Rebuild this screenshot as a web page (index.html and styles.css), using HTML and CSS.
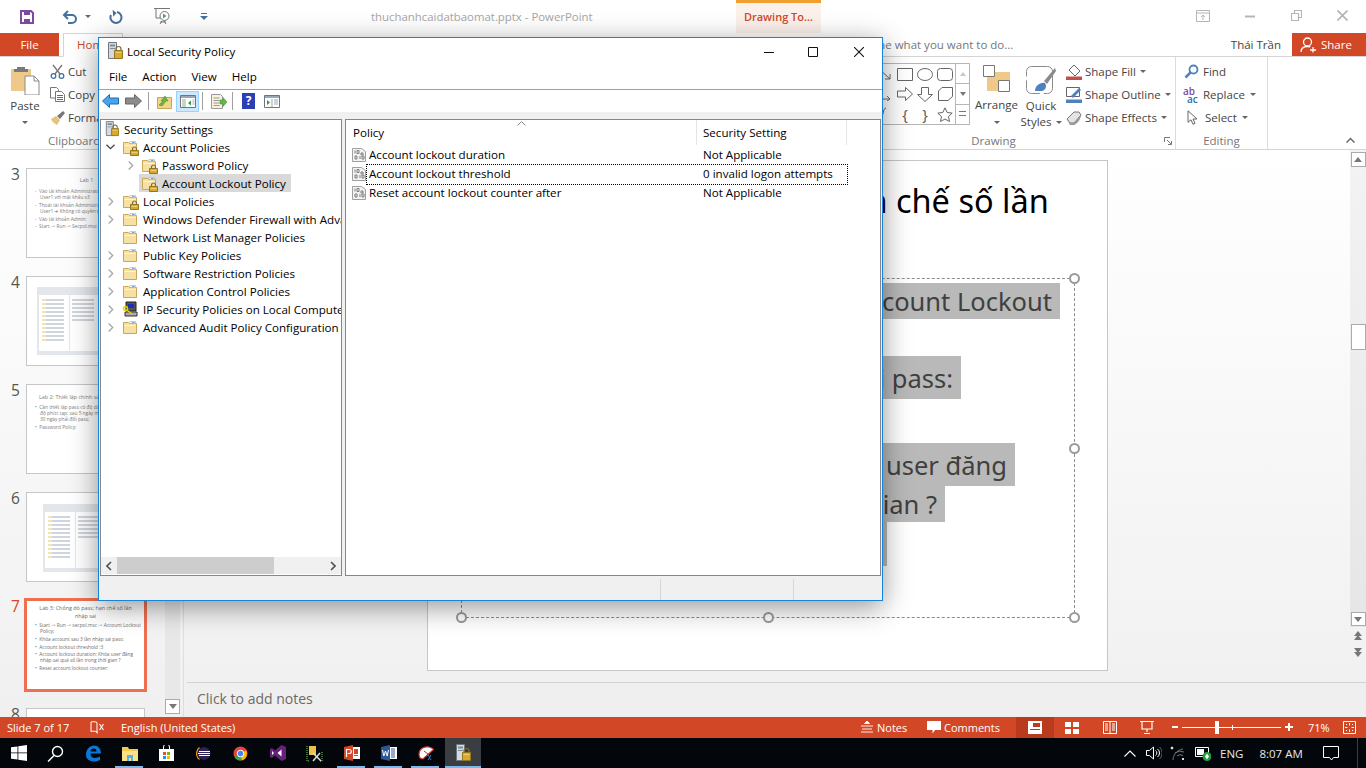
FILE: index.html

```html
<!DOCTYPE html>
<html lang="vi">
<head>
  <meta charset="UTF-8">
  <title>thuchanhcaidatbaomat.pptx - PowerPoint</title>
  <link rel="stylesheet" href="styles.css">
</head>
<body>

  <!-- shared icons -->
  <svg class="defs" width="0" height="0">
    <symbol id="i-folder" viewBox="0 0 16 16">
      <path d="M1.5 3.5h5l1 1h7v10h-13z" fill="#f7e0a3" stroke="#c9a75a"/>
      <path d="M8 2.5h5.5v2H8z" fill="#fff" stroke="#c9a75a" stroke-width=".6"/>
      <path d="M10 3h2.5v1H10z" fill="#6aa6dc"/>
      <path d="M2.5 6h11v1h-11z" fill="#fdf3d6"/>
    </symbol>
    <symbol id="i-lock" viewBox="0 0 9 10">
      <path d="M2.5 4.5V3a2 2 0 0 1 4 0v1.500" fill="none" stroke="#7d6a3a" stroke-width="1.2"/>
      <path d="M.5 4.5h8v5h-8z" fill="#d8a92b" stroke="#94761f"/>
      <path d="M1.5 6h6v1h-6z" fill="#f0cf6a"/>
    </symbol>
    <symbol id="i-policy" viewBox="0 0 14 16">
      <path d="M.5 1.500h9l4 3v10h-13z" fill="#f3f3f3" stroke="#a0a0a0"/>
      <path d="M3 3.500v3M5 3.500h2v3H5zM3 9h2v3H3zM8 9v3M10 9h2v3h-2zM9 6h2v2H9z" fill="none" stroke="#7c7c7c"/>
    </symbol>
    <symbol id="i-server" viewBox="0 0 16 18">
      <path d="M1.500.500h8v16h-8z" fill="#d6dadf" stroke="#6d7680"/>
      <path d="M3 2.500h5v2H3zM3 6h5v1H3z" fill="#7e8a96"/>
      <path d="M9 8.500V7a2.500 2.500 0 0 1 5 0v1.500" fill="none" stroke="#7d6a3a" stroke-width="1.200"/>
      <path d="M7.500 8.500h8v8h-8z" fill="#d8a92b" stroke="#94761f"/>
      <path d="M8.500 10h6v1h-6z" fill="#f0cf6a"/>
    </symbol>
  </svg>

  <div class="ppt">

    <header class="titlebar">
      <div class="qat">
        <svg class="qat-save" width="14" height="14" viewBox="0 0 14 14"><path d="M1 1h10l2 2v10H1z" fill="none" stroke="#7d4aa3" stroke-width="2"/><path d="M4 1h6v4H4zM4 9h6v4H4z" fill="#7d4aa3"/></svg>
        <svg class="qat-undo" width="16" height="14" viewBox="0 0 16 14"><path d="M2 5h8a4 4 0 0 1 0 8H6" fill="none" stroke="#44719f" stroke-width="2"/><path d="M6 1 2 5l4 4" fill="none" stroke="#44719f" stroke-width="2"/></svg>
        <span class="caret qat-caret"></span>
        <svg class="qat-redo" width="14" height="14" viewBox="0 0 14 14"><path d="M8 2a5.500 5.500 0 1 1-6 3" fill="none" stroke="#44719f" stroke-width="2"/><path d="M1 1h5v5z" fill="#44719f" transform="rotate(40 4 4)"/></svg>
        <svg class="qat-show" width="17" height="17" viewBox="0 0 17 17"><path d="M0 .500h16M2 1v9h6M6 14h6" fill="none" stroke="#777"/><circle cx="10.500" cy="8" r="4.500" fill="#fff" stroke="#777"/><path d="M9 5.500v5l3.500-2.500z" fill="#4f9e8a"/><path d="M8 13 6 16M10 13l2 3" stroke="#777"/></svg>
        <svg class="qat-more" width="8" height="7" viewBox="0 0 8 7"><path d="M1 .500h6" stroke="#44719f"/><path d="M0 3h8L4 7z" fill="#44719f"/></svg>
      </div>
      <div class="doc-title">thuchanhcaidatbaomat.pptx - PowerPoint</div>
      <div class="context-tab">Drawing To...</div>
      <div class="win-btns">
        <svg width="14" height="12" viewBox="0 0 14 12"><path d="M.5.500h13v11H.5zM.5 3h13" fill="none" stroke="#b5b5b5"/><path d="M7 10V5M5 7l2-2 2 2" fill="none" stroke="#b5b5b5"/></svg>
        <svg width="10" height="10" viewBox="0 0 10 10"><path d="M0 5.500h10" stroke="#b5b5b5" stroke-width="2"/></svg>
        <svg width="11" height="11" viewBox="0 0 11 11"><path d="M.5 3.500h7v7h-7zM3.500 3V.5h7v7H8" fill="none" stroke="#b5b5b5" stroke-width="1.200"/></svg>
        <svg width="11" height="11" viewBox="0 0 11 11"><path d="M.5.500l10 10M10.500.500l-10 10" stroke="#b5b5b5" stroke-width="1.700"/></svg>
      </div>
    </header>

    <nav class="tabrow">
      <div class="tab-file">File</div>
      <div class="tab-home">Home</div>
      <div class="tell-me">Tell me what you want to do...</div>
      <div class="user">Thái Trần</div>
      <div class="share">
        <svg width="17" height="16" viewBox="0 0 17 16"><circle cx="7.500" cy="5" r="4" fill="none" stroke="#fff" stroke-width="1.300"/><path d="M1 15c0-4 3-5.500 6.500-5.500 1 0 2 .2 2.800.5M13 10v5.500M10 13h6" fill="none" stroke="#fff" stroke-width="1.300"/></svg>
        Share
      </div>
    </nav>

    <section class="ribbon">
      <div class="group group-clip">
        <div class="group-body">
          <div class="big-btn paste-btn">
            <svg width="30" height="30" viewBox="0 0 30 30"><path d="M1 4h20v22H1z" fill="#eec98a"/><path d="M7 2h8v2h3v3H4V4h3z" fill="#7a7a7a"/><path d="M15 11h9l5 5v14H15z" fill="#fff" stroke="#8a8a8a"/><path d="M24 11v5h5" fill="none" stroke="#8a8a8a"/></svg>
            <span>Paste</span>
            <span class="caret"></span>
          </div>
          <div class="small-list">
            <div class="small-btn">
              <svg width="15" height="15" viewBox="0 0 15 15"><path d="M3 1l7 9M12 1l-7 9" stroke="#777" stroke-width="1.300"/><circle cx="3.500" cy="12" r="2.300" fill="none" stroke="#44719f" stroke-width="1.300"/><circle cx="11.500" cy="12" r="2.300" fill="none" stroke="#44719f" stroke-width="1.300"/></svg>
              Cut
            </div>
            <div class="small-btn">
              <svg width="15" height="15" viewBox="0 0 15 15"><path d="M.5.500h6l2 2V11H.5z" fill="#fff" stroke="#777"/><path d="M5.500 4.500h6l3 3v7h-9z" fill="#fff" stroke="#777"/><path d="M7 8.500h6M7 10.500h6M7 12.500h6" stroke="#44719f"/></svg>
              Copy
            </div>
            <div class="small-btn">
              <svg width="15" height="15" viewBox="0 0 15 15"><path d="M1 9l5-3 4 4-3 5C5 14 2 12 1 9z" fill="#e8c27a"/><path d="M7 6l6-5 2 2-5 6z" fill="#777"/></svg>
              Format Painter
            </div>
          </div>
        </div>
        <div class="group-label">Clipboard</div>
      </div>

      <div class="ribbon-right">
        <div class="group group-drawing">
          <div class="group-body">
            <div class="gallery">
              <div class="shape-grid">
                <svg width="16" height="14" viewBox="0 0 16 14"><path d="M1 1l12 11M8 12h5V7" fill="none" stroke="#666"/></svg>
                <svg width="16" height="14" viewBox="0 0 16 14"><path d="M1 1l12 11M8 12h5V7" fill="none" stroke="#666"/></svg>
                <svg width="16" height="13" viewBox="0 0 16 13"><path d="M.5.500h15v12H.5z" fill="none" stroke="#666"/></svg>
                <svg width="16" height="13" viewBox="0 0 16 13"><ellipse cx="8" cy="6.500" rx="7.500" ry="6" fill="none" stroke="#666"/></svg>
                <svg width="16" height="13" viewBox="0 0 16 13"><rect x=".5" y=".5" width="15" height="12" rx="3" fill="none" stroke="#666"/></svg>
                <svg width="16" height="14" viewBox="0 0 16 14"><path d="M1 1v11h12M10 9l3 3-3 2" fill="none" stroke="#666"/></svg>
                <svg width="16" height="14" viewBox="0 0 16 14"><path d="M1 1v11h12M10 9l3 3-3 2" fill="none" stroke="#666"/></svg>
                <svg width="16" height="14" viewBox="0 0 16 14"><path d="M.5 4h8V.500l7 6.500-7 6.500V10h-8z" fill="none" stroke="#666"/></svg>
                <svg width="16" height="15" viewBox="0 0 16 15"><path d="M4.500.500h7v7h4L8 14.500.5 7.500h4z" fill="none" stroke="#666"/></svg>
                <svg width="16" height="14" viewBox="0 0 16 14"><path d="M5 .500h10.500v9L11 13.500H1.500V4z" fill="none" stroke="#666"/></svg>
                <svg width="16" height="15" viewBox="0 0 16 15"><path d="M1 14C7 14 5 1 9 1" fill="none" stroke="#666"/></svg>
                <svg width="16" height="15" viewBox="0 0 16 15"><path d="M1 14C7 14 5 1 9 1" fill="none" stroke="#666"/></svg>
                <span class="brace">{</span>
                <span class="brace">}</span>
                <svg width="16" height="15" viewBox="0 0 16 15"><path d="M8 .800l2.200 4.700 5 .6-3.700 3.400 1 5L8 12l-4.500 2.500 1-5L.8 6.100l5-.6z" fill="none" stroke="#666"/></svg>
              </div>
              <div class="gallery-scroll">
                <span><i class="tri-up light"></i></span>
                <span><i class="tri-down"></i></span>
                <span><i class="tri-more"></i></span>
              </div>
            </div>
            <div class="big-btn arrange-btn">
              <svg width="28" height="27" viewBox="0 0 28 27"><path d="M9 7h18v13H9z" fill="#eec98a"/><path d="M.5.500h11v11H.5z" fill="#fff" stroke="#777"/><path d="M4 12h12v14H4z" fill="#eec98a"/><path d="M15.500 15.500h11v11h-11z" fill="#fff" stroke="#777"/></svg>
              <span>Arrange</span>
              <span class="caret"></span>
            </div>
            <div class="big-btn styles-btn">
              <svg width="30" height="29" viewBox="0 0 30 29"><rect x=".5" y="1.500" width="26" height="27" rx="5" fill="#fff" stroke="#8a8a8a" stroke-dasharray="24 4"/><path d="M18 16 29 3l1 3-9 13z" fill="#8a8a8a"/><path d="M9 26c0-5 5-9 10-8 2 3 1 7-3 8z" fill="#4f81bd"/></svg>
              <span>Quick</span>
              <span class="styles-line">Styles <i class="caret inline"></i></span>
            </div>
            <div class="small-list shape-list">
              <div class="small-btn">
                <svg width="16" height="16" viewBox="0 0 16 16"><path d="M8 1l6 6-5 5-6-6z" fill="#fff" stroke="#666"/><path d="M0 12.500h16V16H0z" fill="#c0504d"/></svg>
                Shape Fill <i class="caret inline"></i>
              </div>
              <div class="small-btn">
                <svg width="16" height="16" viewBox="0 0 16 16"><path d="M.5.500h13v9H.5z" fill="#fff" stroke="#666"/><path d="M5 9l8-8 2 2-8 8z" fill="#4f81bd"/><path d="M0 12.500h16V16H0z" fill="#4f81bd"/></svg>
                Shape Outline <i class="caret inline"></i>
              </div>
              <div class="small-btn">
                <svg width="16" height="14" viewBox="0 0 16 14"><path d="M1 8l7-7h5l2 3-7 8H4z" fill="#e4e4e4" stroke="#777"/><path d="M1 8l3 4h4l7-8c0 4-4 9-7 10H4z" fill="#999"/></svg>
                Shape Effects <i class="caret inline"></i>
              </div>
            </div>
          </div>
          <div class="group-label">Drawing</div>
          <svg class="launcher" width="8" height="8" viewBox="0 0 8 8"><path d="M.5 5V.5H6M3 3l4 4M4 7.500h3.500V4" fill="none" stroke="#777"/></svg>
        </div>

        <div class="group group-editing">
          <div class="group-body">
            <div class="small-list">
              <div class="small-btn edit-btn">
                <svg width="15" height="15" viewBox="0 0 15 15"><circle cx="9.500" cy="5.500" r="4" fill="none" stroke="#4f81bd" stroke-width="1.800"/><path d="M6.500 8.500 1.500 13.500" stroke="#4f81bd" stroke-width="2.500"/></svg>
                Find
              </div>
              <div class="small-btn edit-btn">
                <span class="replace-ico"><b>ab</b><b class="ac">ac</b></span>
                Replace <i class="caret inline replace-caret"></i>
              </div>
              <div class="small-btn edit-btn">
                <svg class="select-ico" width="11" height="15" viewBox="0 0 11 15"><path d="M1 .800v11.500l3-2.500 2 4.500 2-1-2-4.300h4z" fill="#fff" stroke="#666"/></svg>
                Select <i class="caret inline"></i>
              </div>
            </div>
          </div>
          <div class="group-label">Editing</div>
        </div>

        <div class="ribbon-end">
          <svg width="9" height="6" viewBox="0 0 9 6"><path d="M.5 5.500l4-4 4 4" fill="none" stroke="#666" stroke-width="1.500"/></svg>
        </div>
      </div>
    </section>

    <main class="workspace">
      <aside class="thumbs">
        <div class="thumb-list">
          <div class="thumb-row">
            <span class="thumb-num">3</span>
            <div class="thumb">
              <div class="t-title">Lab 1</div>
              <div class="t-line">-&nbsp; Vào tài khoản Administrator tạo</div>
              <div class="t-line t-sub">User1 với mật khẩu x3</div>
              <div class="t-line">-&nbsp; Thoát tài khoản Administrator, vào</div>
              <div class="t-line t-sub">User1 ➔ Không có quyền truy cập</div>
              <div class="t-line">-&nbsp; Vào tài khoản Admin:</div>
              <div class="t-line t-tight">-&nbsp; Start -&gt; Run -&gt; Secpol.msc</div>
            </div>
          </div>
          <div class="thumb-row">
            <span class="thumb-num">4</span>
            <div class="thumb thumb-pic">
              <div class="mini-win">
                <div class="mini-tree"></div>
                <div class="mini-list"></div>
              </div>
            </div>
          </div>
          <div class="thumb-row">
            <span class="thumb-num">5</span>
            <div class="thumb thumb-lab2">
              <div class="t-title t-left">Lab 2: Thiết lập chính sách mật khẩu</div>
              <div class="t-line">•&nbsp; Cần thiết lập pass có độ dài tối thiểu</div>
              <div class="t-line t-sub">độ phức tạp; sau 5 ngày mới được</div>
              <div class="t-line t-sub">30 ngày phải đổi pass;</div>
              <div class="t-line">•&nbsp; Password Policy:</div>
            </div>
          </div>
          <div class="thumb-row">
            <span class="thumb-num">6</span>
            <div class="thumb thumb-pic thumb-pic-b">
              <div class="mini-win">
                <div class="mini-tree"></div>
                <div class="mini-list"></div>
              </div>
            </div>
          </div>
          <div class="thumb-row">
            <span class="thumb-num active">7</span>
            <div class="thumb selected">
              <div class="t-title">Lab 3: Chống dò pass; hạn chế số lần<br>nhập sai</div>
              <div class="t-line">•&nbsp; Start -&gt; Run -&gt; secpol.msc -&gt; Account Lockout</div>
              <div class="t-line t-sub">Policy;</div>
              <div class="t-line">•&nbsp; Khóa account sau 3 lần nhập sai pass:</div>
              <div class="t-line">•&nbsp; Account lockout threshold :3</div>
              <div class="t-line t-tight">•&nbsp; Account lockout duration: Khóa user đăng</div>
              <div class="t-line t-sub">nhập sai quá số lần trong thời gian ?</div>
              <div class="t-line">•&nbsp; Reset account lockout counter:</div>
            </div>
          </div>
          <div class="thumb-row">
            <span class="thumb-num">8</span>
            <div class="thumb"></div>
          </div>
        </div>
        <div class="thumb-scroll">
          <span class="sb-btn sb-spacer"></span>
          <span class="sb-btn"><i class="tri-down"></i></span>
        </div>
      </aside>

      <div class="editor">
        <div class="canvas">
          <div class="slide">
            <div class="slide-title">Lab 3: Chống dò pass; hạn chế số lần</div>
            <div class="slide-title">nhập sai</div>
            <div class="placeholder">
              <div class="ph-line h36 m14"><span>Start -&gt; Run -&gt; secpol.msc -&gt; Account Lockout</span></div>
              <div class="ph-line h37 m300"><span>Policy;</span></div>
              <div class="ph-line h43 m113"><span>Khóa account sau 3 lần nhập sai pass:</span></div>
              <div class="ph-line h44 m300"><span>Account lockout threshold :3</span></div>
              <div class="ph-line h43 m59"><span>Account lockout duration: Khóa user đăng</span></div>
              <div class="ph-line h36 m129"><span>nhập sai quá số lần trong thời gian ?</span></div>
              <div class="ph-line h44 m187"><span>Reset account lockout counter:</span></div>
              <i class="handle h-tr"></i>
              <i class="handle h-mr"></i>
              <i class="handle h-br"></i>
              <i class="handle h-bm"></i>
              <i class="handle h-bl"></i>
            </div>
          </div>
          <div class="edit-scroll">
            <div class="sb-track">
              <span class="sb-btn"><i class="tri-up"></i></span>
              <span class="sb-thumb"></span>
              <span class="sb-btn"><i class="tri-down"></i></span>
            </div>
            <span class="sb-page"><i class="tri-up"></i><i class="tri-up"></i></span>
            <span class="sb-page"><i class="tri-down"></i><i class="tri-down"></i></span>
          </div>
        </div>
        <div class="notes">Click to add notes</div>
      </div>
    </main>

    <footer class="statusbar">
      <div class="status-left">
        <span class="slide-count">Slide 7 of 17</span>
        <svg width="15" height="13" viewBox="0 0 15 13"><path d="M7 1.500C5 .5 3 .5 1 1v9.500c2-.5 4-.5 6 .5 0 0 0 1 .5 1.500M7 1.500V12" fill="none" stroke="#fff"/><path d="M9.500 3l4 6M13.500 3l-4 6" stroke="#fff" stroke-width="1.200"/></svg>
        <span class="lang">English (United States)</span>
      </div>
      <div class="status-right">
        <svg class="notes-ico" width="12" height="12" viewBox="0 0 12 12"><path d="M6 0l2.500 2.500h-5zM0 5h12M1 8h10M0 11h12" fill="#fff" stroke="#fff" stroke-width=".9"/></svg>
        <span class="st-text notes-text">Notes</span>
        <svg class="comm-ico" width="14" height="13" viewBox="0 0 14 13"><path d="M0 0h14v9H8l-2.500 3.500V9H0z" fill="#fff"/></svg>
        <span class="st-text comm-text">Comments</span>
        <div class="view-btns">
          <span class="view-btn on"><svg width="14" height="13" viewBox="0 0 14 13"><path d="M0 0h14v13H0z" fill="#fff"/><path d="M5 2h7v4H5zM2 8h10v1H2z" fill="#b83b1d"/></svg></span>
          <span class="view-btn"><svg width="14" height="12" viewBox="0 0 14 12"><path d="M0 0h6v5H0zM8 0h6v5H8zM0 7h6v5H0zM8 7h6v5H8z" fill="#fff"/></svg></span>
          <span class="view-btn"><svg width="14" height="13" viewBox="0 0 14 13"><path d="M.5.500h13v12H.5zM7 .500v12" fill="none" stroke="#fff"/><path d="M2 3h3M2 5h3M2 7h3M2 9h3M9 3h3M9 5h3M9 7h3M9 9h3" stroke="#fff"/></svg></span>
          <span class="view-btn"><svg width="14" height="13" viewBox="0 0 14 13"><path d="M0 .500h14M2 1v7h10V1M7 8v3M4 12.500h6" fill="none" stroke="#fff" stroke-width="1.200"/></svg></span>
        </div>
        <div class="zoom">
          <span class="z-minus"></span>
          <span class="z-track"><i class="z-tick"></i><i class="z-knob"></i></span>
          <span class="z-plus"></span>
        </div>
        <span class="st-text z-val">71%</span>
        <svg class="fit-ico" width="13" height="13" viewBox="0 0 13 13"><path d="M.5.500h12v12H.5z" fill="none" stroke="#fff"/><path d="M6.500 2v2.500M6.500 8.500V11M2 6.500h2.500M8.500 6.500H11M3 3l1 1M10 3 9 4M3 10l1-1M10 10 9 9" stroke="#fff"/></svg>
      </div>
    </footer>

    <div class="taskbar">
      <div class="task-icons">
        <span class="task"><svg width="16" height="16" viewBox="0 0 16 16"><path d="M0 2.300 6.500 1.400V7.500H0zM7.300 1.300 16 0v7.500H7.300zM0 8.300h6.500v6.300L0 13.700zM7.300 8.300H16V16L7.300 14.700z" fill="#fff"/></svg></span>
        <span class="task"><svg width="17" height="17" viewBox="0 0 17 17"><circle cx="10.500" cy="6.500" r="5" fill="none" stroke="#fff" stroke-width="1.400"/><path d="M7 10.500 1 16.500" stroke="#fff" stroke-width="1.500"/></svg></span>
        <span class="task"><svg width="16" height="17" viewBox="0 0 16 17"><path d="M1 10C1 4 5 .5 9 .5c4 0 7 3 7 8H5.500c0 3 2 4.500 4.500 4.500 2 0 4-.8 5-1.500v3.500c-1.500.8-3.500 1.500-5.500 1.500C4.500 16.500 1 14 1 10zM5.500 6.500h6C11.500 4.500 10.500 3.500 8.800 3.500 7 3.500 5.800 4.800 5.500 6.500z" fill="#0a78d7"/></svg></span>
        <span class="task running"><svg width="16" height="15" viewBox="0 0 16 15"><path d="M0 1h6l1 2h9v12H0z" fill="#f4c94f"/><path d="M0 5h16v10H0z" fill="#fbe08a"/><path d="M5 15V9h6v6h-2v-3H7v3z" fill="#52b3e8"/></svg></span>
        <span class="task"><svg width="15" height="16" viewBox="0 0 15 16"><path d="M0 4h15v12H0z" fill="#fff"/><path d="M4.500 4V2a3 3 0 0 1 6 0v2" fill="none" stroke="#fff"/><path d="M4 7h3v3H4z" fill="#f25022"/><path d="M8 7h3v3H8z" fill="#7fba00"/><path d="M4 11h3v3H4z" fill="#00a4ef"/><path d="M8 11h3v3H8z" fill="#ffb900"/></svg></span>
        <span class="task"><svg width="15" height="15" viewBox="0 0 15 15"><circle cx="8" cy="7.500" r="6.500" fill="#2c2255"/><path d="M3 5.500h11M2 7.500h12M3 9.500h11" stroke="#fff"/><path d="M3.500 1.500a7.500 7.500 0 0 0 0 12" fill="none" stroke="#f7941e" stroke-width="1.200"/></svg></span>
        <span class="task"><svg width="15" height="15" viewBox="0 0 15 15"><circle cx="7.500" cy="7.500" r="7" fill="#e8453c"/><path d="M7.500 7.500 1.500 11a7 7 0 0 0 8 3z" fill="#34a853"/><path d="M7.500 7.500l5.500-3A7 7 0 0 1 9 14.400z" fill="#fbbc05"/><circle cx="7.500" cy="7.500" r="3.300" fill="#4285f4" stroke="#fff"/></svg></span>
        <span class="task"><svg width="16" height="16" viewBox="0 0 16 16"><path d="M11.500 0 16 2v12l-4.500 2L5 10.500 2 13 0 12V4l2-1 3 2.500z" fill="#68217a"/><path d="M11.500 4.500v7L7.500 8zM2 6l2 2-2 2z" fill="#fff"/></svg></span>
        <span class="task"><svg width="17" height="17" viewBox="0 0 17 17"><path d="M3 1h7v9H3z" fill="#e8c24a"/><path d="M1 1v15h3M14 16h2V6" fill="none" stroke="#7bd45a" stroke-dasharray="1 1"/><path d="M7 8l8 8M14 8l-7 8" stroke="#ddd" stroke-width="1.500"/></svg></span>
        <span class="task running"><svg width="16" height="16" viewBox="0 0 16 16"><path d="M0 2l9-2v16l-9-2z" fill="#d24726"/><path d="M9 2h7v12H9z" fill="#fff"/><path d="M10 4h4v5h-4zM10 10h4v1h-4z" fill="#d24726"/><path d="M2.500 12V4.500h2.800a1.500 1.500 0 0 1 0 4H3.800" fill="none" stroke="#fff" stroke-width="1.200"/></svg></span>
        <span class="task running"><svg width="16" height="16" viewBox="0 0 16 16"><path d="M0 2l9-2v16l-9-2z" fill="#2b579a"/><path d="M9 2h7v12H9z" fill="#fff"/><path d="M10 4h4M10 6h4M10 8h4M10 10h4M10 12h4" stroke="#2b579a"/><path d="M1.500 5l1.300 6 1.700-5 1.700 5L7.500 5" fill="none" stroke="#fff" stroke-width="1"/></svg></span>
        <span class="task running"><svg width="16" height="15" viewBox="0 0 16 15"><path d="M1 8C1 3 6 0 11 1c3 .8 5 2 4 3L5 13C2 13 1 11 1 8z" fill="#fff" stroke="#c8312b" stroke-width="1.200"/><path d="M6 5l4 3" stroke="#c8312b"/><path d="M10 9l3 5M13 9l-3 5" stroke="#2f7fd1"/></svg></span>
        <span class="task active running"><svg width="16" height="18"><use href="#i-server"/></svg></span>
      </div>
      <div class="tray">
        <svg class="tr-up" width="12" height="7" viewBox="0 0 12 7"><path d="M.5 6.500l5.500-5.500 5.500 5.500" fill="none" stroke="#fff" stroke-width="1.100"/></svg>
        <svg class="tr-vol" width="16" height="14" viewBox="0 0 16 14"><path d="M.5 4.500h3l4-3.500v12l-4-3.500h-3z" fill="none" stroke="#fff"/><path d="M9.500 4.500a3 3 0 0 1 0 5M11.500 3a5 5 0 0 1 0 8" fill="none" stroke="#fff"/><path d="M13.500 1a8 8 0 0 1 0 12" fill="none" stroke="#666"/></svg>
        <svg class="tr-wifi" width="15" height="15" viewBox="0 0 15 15"><path d="M1 1l2 2M3 1 1 3M2 .500v3M.5 2h3" stroke="#fff" stroke-width=".7"/><path d="M5 7a9 9 0 0 1 9-1M7 10a5 5 0 0 1 6-.500M3 14c0-4 3-10 10-11" fill="none" stroke="#777"/><path d="M12 12h2v2h-2z" fill="#ddd"/></svg>
        <svg class="tr-bat" width="16" height="15" viewBox="0 0 16 15"><path d="M.5 1.500h13v9H.5z" fill="none" stroke="#fff"/><path d="M2 3h7v6H2z" fill="#fff"/><circle cx="12" cy="10.500" r="4.500" fill="#1f9d3e"/><path d="M12 7.500l2 3-2 3-2-3z" fill="#fff"/></svg>
        <span class="tr-lang">ENG</span>
        <span class="tr-time">8:07 AM</span>
        <svg class="tr-note" width="16" height="15" viewBox="0 0 16 15"><path d="M.5.500h15v11h-5l-2 2.500-2-2.500H.5z" fill="none" stroke="#fff"/></svg>
      </div>
    </div>
  </div>

  <!-- the floating window -->
  <div class="secpol">
    <div class="sp-title">
      <svg width="16" height="18"><use href="#i-server"/></svg>
      <span>Local Security Policy</span>
      <div class="sp-ctrls">
        <span class="ctrl-min"><svg width="10" height="10" viewBox="0 0 10 10"><path d="M0 5.500h10" stroke="#111"/></svg></span>
        <span><svg width="10" height="10" viewBox="0 0 10 10"><path d="M.5.500h9v9h-9z" fill="none" stroke="#111"/></svg></span>
        <span><svg width="10" height="10" viewBox="0 0 10 10"><path d="M0 0l10 10M10 0 0 10" stroke="#111" stroke-width="1.100"/></svg></span>
      </div>
    </div>
    <div class="sp-menu">
      <span>File</span><span>Action</span><span>View</span><span>Help</span>
    </div>
    <div class="sp-tools">
      <svg class="tool-back" width="17" height="14" viewBox="0 0 17 14"><path d="M7.500.500v3.500h9v6h-9v3.500L.5 7z" fill="#4aa5e8" stroke="#1b6cb5"/></svg>
      <svg class="tool-fwd" width="17" height="14" viewBox="0 0 17 14"><path d="M9.500.500v3.500h-9v6h9v3.500l7-6.500z" fill="#8b8b8b" stroke="#666"/></svg>
      <i class="tool-sep"></i>
      <svg class="tool-up" width="15" height="15" viewBox="0 0 15 15"><path d="M.5 3.500h14v11H.5z" fill="#f3d58a" stroke="#c9a75a"/><path d="M2 11 6 7H4l4-5 3 5H9l-4 5z" fill="#6cb33f" stroke="#4b8a22" stroke-width=".5"/></svg>
      <span class="tool-on">
        <svg width="16" height="13" viewBox="0 0 16 13"><path d="M.5.500h15v12H.5z" fill="#fff" stroke="#6d7680"/><path d="M1 1h14v2H1z" fill="#9aa7b5"/><path d="M2 4h4v8H2z" fill="#c9d6c3"/><path d="M11 5.500v5L8 8z" fill="#2f9a4a"/><path d="M12.500 5h2M12.500 7h2M12.500 9h2" stroke="#9aa7b5"/></svg>
      </span>
      <i class="tool-sep tool-sep-b"></i>
      <svg class="tool-exp" width="16" height="15" viewBox="0 0 16 15"><path d="M.5.500h9l2 2v12H.5z" fill="#f7f1de" stroke="#9a9a9a"/><path d="M2.500 4h6M2.500 6.500h6M2.500 9h6M2.500 11.500h6" stroke="#9a9a9a"/><path d="M9 6h3V3.500L16 8l-4 4.500V10H9z" fill="#62b848" stroke="#3f8a2c" stroke-width=".5"/></svg>
      <i class="tool-sep tool-sep-c"></i>
      <span class="tool-help">?</span>
      <svg class="tool-prop" width="16" height="13" viewBox="0 0 16 13"><path d="M.5.500h15v12H.5z" fill="#fff" stroke="#6d7680"/><path d="M1 1h14v2H1z" fill="#9aa7b5"/><path d="M3 5v5l3-2.500z" fill="#2f9a4a"/><path d="M8 4v8" stroke="#9aa7b5"/><path d="M10 5h4M10 7h4M10 9h4" stroke="#9aa7b5"/></svg>
    </div>
    <div class="sp-panes">
      <div class="tree-pane">
        <div class="tree">
          <div class="tree-row root">
            <svg width="14" height="16"><use href="#i-server"/></svg>
            <span>Security Settings</span>
          </div>
          <div class="tree-row l1">
            <svg class="tw tw-open" width="9" height="6" viewBox="0 0 9 6"><path d="M.5.700l4 4 4-4" fill="none" stroke="#444" stroke-width="1.300"/></svg>
            <span class="fold"><svg width="16" height="16"><use href="#i-folder"/></svg><svg class="padlock" width="9" height="10"><use href="#i-lock"/></svg></span>
            <span>Account Policies</span>
          </div>
          <div class="tree-row l2">
            <svg class="tw" width="6" height="9" viewBox="0 0 6 9"><path d="M.7.500l4 4-4 4" fill="none" stroke="#a6a6a6" stroke-width="1.300"/></svg>
            <span class="fold"><svg width="16" height="16"><use href="#i-folder"/></svg><svg class="padlock" width="9" height="10"><use href="#i-lock"/></svg></span>
            <span>Password Policy</span>
          </div>
          <div class="tree-row l2 sel">
            <span class="fold"><svg width="16" height="16"><use href="#i-folder"/></svg><svg class="padlock" width="9" height="10"><use href="#i-lock"/></svg></span>
            <span>Account Lockout Policy</span>
          </div>
          <div class="tree-row l1">
            <svg class="tw" width="6" height="9" viewBox="0 0 6 9"><path d="M.7.500l4 4-4 4" fill="none" stroke="#a6a6a6" stroke-width="1.300"/></svg>
            <span class="fold"><svg width="16" height="16"><use href="#i-folder"/></svg><svg class="padlock" width="9" height="10"><use href="#i-lock"/></svg></span>
            <span>Local Policies</span>
          </div>
          <div class="tree-row l1">
            <svg class="tw" width="6" height="9" viewBox="0 0 6 9"><path d="M.7.500l4 4-4 4" fill="none" stroke="#a6a6a6" stroke-width="1.300"/></svg>
            <span class="fold"><svg width="16" height="16"><use href="#i-folder"/></svg></span>
            <span>Windows Defender Firewall with Advanced Security</span>
          </div>
          <div class="tree-row l1">
            <span class="fold"><svg width="16" height="16"><use href="#i-folder"/></svg></span>
            <span>Network List Manager Policies</span>
          </div>
          <div class="tree-row l1">
            <svg class="tw" width="6" height="9" viewBox="0 0 6 9"><path d="M.7.500l4 4-4 4" fill="none" stroke="#a6a6a6" stroke-width="1.300"/></svg>
            <span class="fold"><svg width="16" height="16"><use href="#i-folder"/></svg></span>
            <span>Public Key Policies</span>
          </div>
          <div class="tree-row l1">
            <svg class="tw" width="6" height="9" viewBox="0 0 6 9"><path d="M.7.500l4 4-4 4" fill="none" stroke="#a6a6a6" stroke-width="1.300"/></svg>
            <span class="fold"><svg width="16" height="16"><use href="#i-folder"/></svg></span>
            <span>Software Restriction Policies</span>
          </div>
          <div class="tree-row l1">
            <svg class="tw" width="6" height="9" viewBox="0 0 6 9"><path d="M.7.500l4 4-4 4" fill="none" stroke="#a6a6a6" stroke-width="1.300"/></svg>
            <span class="fold"><svg width="16" height="16"><use href="#i-folder"/></svg></span>
            <span>Application Control Policies</span>
          </div>
          <div class="tree-row l1">
            <svg class="tw" width="6" height="9" viewBox="0 0 6 9"><path d="M.7.500l4 4-4 4" fill="none" stroke="#a6a6a6" stroke-width="1.300"/></svg>
            <span class="fold"><svg width="16" height="16" viewBox="0 0 16 16"><path d="M4 1h10v9H4z" fill="#555" stroke="#222"/><path d="M6 3h6v4H6z" fill="#1a2fb8"/><path d="M3 11h12v4H3z" fill="#aaa" stroke="#333"/><circle cx="3.500" cy="7.500" r="2" fill="none" stroke="#e8d200" stroke-width="1.400"/><path d="M5 9l5 4" stroke="#e8d200" stroke-width="1.400"/></svg></span>
            <span>IP Security Policies on Local Computer</span>
          </div>
          <div class="tree-row l1">
            <svg class="tw" width="6" height="9" viewBox="0 0 6 9"><path d="M.7.500l4 4-4 4" fill="none" stroke="#a6a6a6" stroke-width="1.300"/></svg>
            <span class="fold"><svg width="16" height="16"><use href="#i-folder"/></svg></span>
            <span>Advanced Audit Policy Configuration</span>
          </div>
        </div>
        <div class="hscroll">
          <span class="hs-btn"><svg width="6" height="10" viewBox="0 0 6 10"><path d="M5 1 1 5l4 4" fill="none" stroke="#505050" stroke-width="1.600"/></svg></span>
          <div class="hs-track"><i class="hs-thumb"></i></div>
          <span class="hs-btn"><svg width="6" height="10" viewBox="0 0 6 10"><path d="M1 1l4 4-4 4" fill="none" stroke="#505050" stroke-width="1.600"/></svg></span>
        </div>
      </div>
      <div class="list-pane">
        <div class="list-head">
          <span class="col-a">Policy</span>
          <span class="col-b">Security Setting</span>
          <svg class="sort-mark" width="9" height="5" viewBox="0 0 9 5"><path d="M.5 4.500l4-4 4 4" fill="none" stroke="#888"/></svg>
        </div>
        <div class="list-row">
          <svg width="14" height="16"><use href="#i-policy"/></svg>
          <span class="col-a">Account lockout duration</span>
          <span class="col-b">Not Applicable</span>
        </div>
        <div class="list-row focus">
          <svg width="14" height="16"><use href="#i-policy"/></svg>
          <span class="col-a">Account lockout threshold</span>
          <span class="col-b">0 invalid logon attempts</span>
        </div>
        <div class="list-row">
          <svg width="14" height="16"><use href="#i-policy"/></svg>
          <span class="col-a">Reset account lockout counter after</span>
          <span class="col-b">Not Applicable</span>
        </div>
      </div>
    </div>
    <div class="sp-status">
      <span class="sp-cell grow"></span>
      <span class="sp-cell mid"></span>
      <span class="sp-cell end"></span>
    </div>
  </div>

</body>
</html>
```

FILE: styles.css

```css
* { box-sizing: border-box; }
html, body { margin: 0; height: 100%; }
body {
  width: 1366px;
  height: 768px;
  overflow: hidden;
  position: relative;
  font-family: "Open Sans", "Noto Sans", sans-serif;
  font-size: 11.5px;
  color: #444;
  background: #fff;
}
svg { display: block; flex: none; }
i { font-style: normal; }
.defs { position: absolute; }

.ppt {
  display: flex;
  flex-direction: column;
  height: 768px;
}

/* ---- title bar ---- */
.titlebar {
  display: flex;
  height: 33px;
  flex: none;
  background: #fff;
}
.qat {
  width: 371px;
  display: flex;
  align-items: center;
}
.qat-save { margin-left: 20px; }
.qat-undo { margin-left: 28px; }
.qat-caret { margin-left: 7px; }
.qat-redo { margin-left: 18px; }
.qat-show { margin-left: 31px; }
.qat-more { margin-left: 29px; }
.doc-title {
  width: 365px;
  line-height: 33px;
  color: #a6a6a6;
  font-size: 11.4px;
}
.context-tab {
  width: 85px;
  text-align: center;
  background: #fbf0ea;
  border-top: 3px solid #f0a030;
  color: #d24726;
  line-height: 27px;
  font-size: 11px;
  font-weight: 600;
}
.win-btns {
  margin-left: auto;
  width: 184px;
  display: flex;
  align-items: center;
  justify-content: space-between;
  padding: 0 18px 2px 14px;
}

/* ---- tab row ---- */
.tabrow {
  display: flex;
  height: 24px;
  flex: none;
  align-items: stretch;
  border-bottom: 1px solid #d4d4d4;
  background: #fff;
}
.tab-file {
  width: 59px;
  background: #d24726;
  color: #fff;
  text-align: center;
  line-height: 23px;
}
.tab-home {
  width: 60px;
  margin-left: 4px;
  height: 24px;
  padding-left: 13px;
  border: 1px solid #d4d4d4;
  border-bottom-color: #fff;
  color: #d24726;
  line-height: 22px;
  background: #fff;
}
.tell-me {
  width: 890px;
  padding-left: 730px;
  white-space: nowrap;
  color: #777;
  line-height: 23px;
}
.user {
  margin-left: auto;
  color: #444;
  line-height: 23px;
  margin-right: 11px;
}
.share {
  width: 74px;
  background: #d24726;
  color: #fff;
  display: flex;
  align-items: center;
  gap: 4px;
  padding-left: 8px;
}

/* ---- ribbon ---- */
.ribbon {
  display: flex;
  justify-content: space-between;
  height: 93px;
  flex: none;
  border-bottom: 1px solid #d4d4d4;
  background: #fff;
}
.ribbon-right { display: flex; }
.group {
  display: flex;
  flex-direction: column;
  position: relative;
  height: 92px;
}
.group-body {
  display: flex;
  height: 75px;
}
.group-label {
  text-align: center;
  line-height: 17px;
  color: #777;
}
.big-btn {
  display: flex;
  flex-direction: column;
  align-items: center;
  line-height: 16px;
  color: #444;
}
.caret {
  display: inline-block;
  width: 0;
  height: 0;
  border: 3px solid transparent;
  border-top: 3px solid #666;
  border-bottom: 0;
}
.caret.inline { vertical-align: middle; margin-left: 1px; }
.paste-btn { width: 50px; padding-top: 8px; }
.paste-btn span:nth-child(2) { margin-top: 3px; }
.paste-btn .caret { margin-top: 7px; }
.small-list {
  display: flex;
  flex-direction: column;
  padding-top: 3px;
}
.small-btn {
  height: 23px;
  display: flex;
  align-items: center;
  gap: 3px;
  white-space: nowrap;
  color: #444;
}
.group-drawing {
  width: 364px;
  padding-left: 42px;
  border-right: 1px solid #dcdcdc;
}
.group-drawing .group-label { margin-left: -42px; }
.gallery {
  width: 116px;
  height: 62px;
  margin-top: 6px;
  display: flex;
  border: 1px solid #b6b6b6;
}
.shape-grid {
  flex: 1;
  display: grid;
  grid-template-columns: repeat(5, 20px);
  grid-auto-rows: 20px;
  align-items: center;
  justify-items: center;
}
.brace { font-size: 15px; color: #555; line-height: 20px; }
.gallery-scroll {
  width: 14px;
  display: flex;
  flex-direction: column;
  border-left: 1px solid #b6b6b6;
}
.gallery-scroll span {
  flex: 1;
  display: flex;
  align-items: center;
  justify-content: center;
  border-bottom: 1px solid #b6b6b6;
}
.gallery-scroll span:last-child { border-bottom: 0; }
.tri-up, .tri-down {
  display: block;
  width: 0;
  height: 0;
  border: 4px solid transparent;
}
.tri-up { border-bottom: 5px solid #777; border-top: 0; }
.tri-up.light { border-bottom-color: #c8c8c8; }
.tri-down { border-top: 5px solid #777; border-bottom: 0; }
.gallery-scroll .tri-up, .gallery-scroll .tri-down { border-width: 3.5px; }
.gallery-scroll .tri-up { border-top-width: 0; border-bottom-width: 4px; }
.gallery-scroll .tri-down { border-bottom-width: 0; border-top-width: 4px; }
.tri-more {
  display: block;
  width: 7px;
  height: 7px;
  border-top: 1px solid #777;
  background: linear-gradient(#777, #777) center 3px / 7px 1px no-repeat;
}
.arrange-btn { width: 47px; margin-left: 3px; padding-top: 8px; }
.arrange-btn span:nth-child(2) { margin-top: 5px; }
.arrange-btn .caret { margin-top: 8px; }
.styles-btn { width: 40px; padding-top: 8px; margin-left: 1px; }
.styles-btn span:nth-child(2) { margin-top: 4px; }
.styles-line { white-space: nowrap; }
.shape-list { margin-left: 5px; }
.launcher { position: absolute; right: 3px; bottom: 4px; }
.group-editing {
  width: 92px;
  border-right: 1px solid #dcdcdc;
}
.edit-btn { gap: 4px; padding-left: 8px; }
.select-ico { margin: 0 3px 0 3px; }
.replace-ico {
  width: 16px;
  font-size: 10px;
  line-height: 8px;
  margin-left: -1px;
  display: flex;
  flex-direction: column;
}
.replace-ico b { font-weight: 600; color: #7d4aa3; }
.replace-ico .ac { color: #2f6fb0; padding-left: 4px; }
.replace-caret { margin-left: 11px; }
.ribbon-end {
  width: 98px;
  display: flex;
  align-items: flex-end;
  justify-content: flex-end;
  padding: 0 11px 6px 0;
}

/* ---- workspace ---- */
.workspace {
  flex: 1;
  display: flex;
  min-height: 0;
  background: linear-gradient(#fff, #f0f0f0);
}
.thumbs {
  width: 184px;
  display: flex;
  border-right: 1px solid #dedede;
}
.thumb-list {
  width: 165px;
  height: 567px;
  overflow: hidden;
  padding-top: 18px;
}
.thumb-row {
  display: flex;
  height: 108px;
}
.thumb-num {
  width: 26px;
  padding-left: 11px;
  font-size: 15.5px;
  line-height: 12px;
  color: #555;
}
.thumb-num.active { color: #d24726; }
.thumb {
  width: 119px;
  height: 90px;
  background: #fff;
  border: 1px solid #c6c6c6;
  overflow: hidden;
  padding: 7px 6px 0 8px;
  font-size: 4.8px;
  line-height: 6px;
  color: #7d7d7d;
  white-space: nowrap;
}
.t-title { text-align: center; font-size: 5.4px; line-height: 8px; margin-bottom: 4px; white-space: nowrap; }
.t-left { text-align: left; padding-left: 4px; margin-bottom: 3px; }
.t-line { margin-top: 2px; }
.t-sub { padding-left: 5px; margin-top: 0; }
.t-tight { margin-top: 1px; }
.thumb-lab2 { padding-top: 8px; }
.thumb.selected {
  width: 123px;
  height: 94px;
  margin: -2px 0 0 -2px;
  border: 3px solid #ef7050;
  padding: 3px 4px 0 8px;
  color: #6d6d6d;
}
.thumb.selected .t-title { margin: 0 0 0 -4px; }
.thumb-pic { padding: 10px 0 0 10px; }
.thumb-pic-b { padding: 11px 0 0 16px; }
.mini-win {
  width: 130px;
  height: 68px;
  background: #e3e6ea;
  padding: 8px 2px 4px;
  display: flex;
  gap: 1px;
}
.mini-tree {
  width: 30px;
  background:
    repeating-linear-gradient(#fff 0 2px, transparent 2px 4px) 0 2px / 100% 44px no-repeat,
    linear-gradient(90deg, #fff 0 3px, #f3e2b4 3px 7px, #d0d4db 7px 25px, #fff 25px) 0 2px / 100% 44px no-repeat,
    #fff;
}
.mini-list {
  flex: 1;
  background:
    repeating-linear-gradient(#fff 0 2px, transparent 2px 4px) 0 2px / 100% 24px no-repeat,
    linear-gradient(90deg, #d0d4db 0 22px, #fff 22px) 2px 2px / 100% 24px no-repeat,
    #fff;
}
.thumb-scroll {
  width: 15px;
  background: #e8e8e8;
  display: flex;
  flex-direction: column;
  justify-content: space-between;
  height: 564px;
}
.sb-btn {
  width: 15px;
  height: 15px;
  flex: none;
  background: #fff;
  border: 1px solid #ababab;
  display: flex;
  align-items: center;
  justify-content: center;
}
.sb-spacer { visibility: hidden; }
.editor {
  flex: 1;
  display: flex;
  flex-direction: column;
  min-width: 0;
}
.canvas {
  flex: 1;
  display: flex;
  justify-content: space-between;
  padding: 10px 0 0 243px;
}
.slide {
  width: 681px;
  height: 511px;
  flex: none;
  background: #fff;
  border: 1px solid #c6c6c6;
  position: relative;
  color: #000;
  font-family: "Noto Sans", "Open Sans", sans-serif;
}
.slide-title {
  text-align: center;
  font-size: 32.5px;
  line-height: 38px;
}
.slide-title:first-child { padding-top: 21px; box-sizing: content-box; }
.placeholder {
  position: absolute;
  left: 33px;
  top: 117px;
  width: 614px;
  height: 340px;
  border: 1px dashed #8c8c8c;
  padding-top: 4px;
  font-size: 25.5px;
  color: #404040;
}
.ph-line {
  display: flex;
  justify-content: flex-end;
  align-items: stretch;
  white-space: nowrap;
}
.ph-line span {
  background: #b9b9b9;
  padding-right: 8px;
  display: flex;
  align-items: center;
}
.h36 { height: 36px; }
.h37 { height: 37px; }
.h43 { height: 43px; }
.h44 { height: 44px; }
.m14 { margin-right: 14px; }
.m59 { margin-right: 59px; }
.m113 { margin-right: 113px; }
.m129 { margin-right: 129px; }
.m187 { margin-right: 187px; }
.m300 { margin-right: 300px; }
.handle {
  position: absolute;
  width: 11px;
  height: 11px;
  border-radius: 50%;
  border: 2px solid #9a9a9a;
  background: #fff;
}
.h-tr { right: -6px; top: -6px; }
.h-mr { right: -6px; top: 164px; }
.h-br { right: -6px; bottom: -6px; }
.h-bm { left: 301px; bottom: -6px; }
.h-bl { left: -6px; bottom: -6px; }
.edit-scroll {
  width: 16px;
  flex: none;
  margin-top: -10px;
  display: flex;
  flex-direction: column;
  align-items: center;
}
.sb-track {
  width: 16px;
  height: 477px;
  flex: none;
  padding-top: 2px;
  background: linear-gradient(#f3f3f3, #e6e6e6);
  display: flex;
  flex-direction: column;
  align-items: center;
}
.sb-thumb {
  width: 15px;
  height: 26px;
  flex: none;
  margin-top: 157px;
  background: #fff;
  border: 1px solid #ababab;
}
.sb-thumb + .sb-btn { margin-top: 262px; height: 14px; }
.sb-page {
  height: 17px;
  flex: none;
  padding-top: 4px;
  width: 16px;
  display: flex;
  flex-direction: column;
  align-items: center;
}
.sb-page i { margin-bottom: -1px; }
.notes {
  height: 35px;
  border-top: 1px solid #d2d2d2;
  margin-left: 3px;
  padding-left: 10px;
  font-size: 14px;
  line-height: 32px;
  color: #6a6a6a;
  background: #efefef;
}

/* ---- status bar ---- */
.statusbar {
  height: 21px;
  flex: none;
  background: #d24726;
  color: #fff;
  display: flex;
  justify-content: space-between;
  align-items: stretch;
  font-size: 11px;
}
.status-left, .status-right { display: flex; align-items: center; padding-bottom: 1px; }
.slide-count { margin-left: 7px; width: 83px; }
.lang { margin-left: 16px; }
.status-right { width: 525px; }
.notes-ico { margin-left: 20px; }
.st-text { margin-left: 4px; white-space: nowrap; }
.notes-text { width: 30px; }
.comm-ico { margin-left: 20px; }
.comm-text { margin-left: 3px; width: 55px; }
.view-btns { display: flex; margin-left: 17px; height: 21px; margin-top: 1px; }
.view-btn {
  width: 37.5px;
  display: flex;
  align-items: center;
  justify-content: center;
}
.view-btn.on { background: #b83b1d; }
.zoom {
  display: flex;
  align-items: center;
  margin-left: 6px;
  height: 21px;
}
.z-minus { width: 6px; height: 2px; background: #fff; }
.z-track {
  width: 99px;
  height: 1px;
  margin: 0 4px;
  background: #fff;
  position: relative;
}
.z-tick { position: absolute; left: 50px; top: -2px; width: 1px; height: 5px; background: #fff; }
.z-knob { position: absolute; left: 33px; top: -6px; width: 4px; height: 13px; background: #fff; }
.z-plus {
  width: 8px;
  height: 8px;
  background: linear-gradient(#fff, #fff) center / 8px 2px no-repeat, linear-gradient(#fff, #fff) center / 2px 8px no-repeat;
}
.z-val { margin-left: 15px; width: 22px; }
.fit-ico { margin-left: 13px; }

/* ---- taskbar ---- */
.taskbar {
  height: 30px;
  flex: none;
  background: #03060a;
  display: flex;
  justify-content: space-between;
  color: #e8e8e8;
}
.task-icons { display: flex; }
.task {
  width: 37px;
  height: 30px;
  display: flex;
  align-items: center;
  justify-content: center;
  position: relative;
}
.task.running::after {
  content: "";
  position: absolute;
  left: 4px;
  right: 5px;
  bottom: 0;
  height: 2px;
  background: #76b9ed;
}
.task.active { background: #3a3d41; width: 36px; margin-left: 1px; }
.task.active::after { left: 0; right: 0; }
.tray {
  width: 244px;
  display: flex;
  align-items: center;
  padding-left: 10px;
  border-right: 1px solid #3c3c3c;
  margin-right: 8px;
}
.tr-vol { margin-left: 10px; }
.tr-wifi { margin-left: 8px; }
.tr-bat { margin-left: 10px; }
.tr-lang { margin-left: 9px; }
.tr-time { margin-left: 16px; white-space: nowrap; width: 44px; }
.tr-note { margin-left: 20px; }

/* ---- Local Security Policy window ---- */
.secpol {
  position: absolute;
  left: 98px;
  top: 37px;
  width: 785px;
  height: 564px;
  display: flex;
  flex-direction: column;
  background: #fff;
  border: 1px solid #1883d7;
  box-shadow: 0 6px 26px rgba(0, 0, 0, .42);
  color: #000;
  font-size: 11.6px;
}
.sp-title {
  height: 28px;
  flex: none;
  display: flex;
  align-items: center;
  gap: 4px;
  padding: 0 0 2px 8px;
}
.sp-ctrls {
  margin-left: auto;
  display: flex;
  margin-bottom: -2px;
}
.sp-ctrls span {
  width: 46px;
  height: 28px;
  display: flex;
  align-items: center;
  justify-content: center;
}
.sp-ctrls .ctrl-min { padding-left: 4px; }
.sp-menu {
  height: 24px;
  flex: none;
  display: flex;
  align-items: center;
  gap: 15px;
  padding: 0 0 2px 10px;
  border-bottom: 1px solid #a0a0a0;
}
.sp-tools {
  height: 22px;
  flex: none;
  display: flex;
  align-items: center;
}
.tool-back { margin-left: 3px; }
.tool-fwd { margin-left: 6px; }
.tool-sep { width: 1px; height: 18px; background: #a0a0a0; margin-left: 6px; }
.tool-up { margin-left: 8px; }
.tool-on {
  width: 23px;
  height: 21px;
  margin-left: 4px;
  display: flex;
  align-items: center;
  justify-content: center;
  background: #cce8ff;
  border: 1px solid #99d1ff;
}
.tool-sep-b { margin-left: 3px; }
.tool-exp { margin-left: 8px; }
.tool-sep-c { margin-left: 5px; }
.tool-help {
  width: 13px;
  height: 16px;
  margin-left: 9px;
  background: #2c3fb5;
  color: #fff;
  text-align: center;
  font-weight: 700;
  font-size: 12px;
  line-height: 16px;
}
.tool-prop { margin-left: 9px; }
.sp-panes {
  flex: 1;
  min-height: 0;
  display: flex;
  gap: 3px;
  padding: 7px 1px 1px 1px;
  background: #f0f0f0;
}
.tree-pane {
  width: 242px;
  background: #fff;
  border: 1px solid #828790;
  display: flex;
  flex-direction: column;
  min-width: 0;
}
.tree {
  flex: 1;
  overflow: hidden;
}
.tree-row {
  height: 18px;
  display: flex;
  align-items: center;
  white-space: nowrap;
  position: relative;
}
.tree-row.root { padding-left: 4px; gap: 5px; }
.tw { position: absolute; left: 7px; }
.tw-open { left: 5px; }
.tree-row.l1 { padding-left: 21px; }
.tree-row.l2 { padding-left: 40px; }
.tree-row.l2 .tw { left: 27px; }
.fold {
  width: 16px;
  height: 16px;
  flex: none;
  position: relative;
  margin-right: 5px;
}
.padlock { position: absolute; right: -1px; bottom: -1px; }
.tree-row.sel { z-index: 0; }
.tree-row.sel::before {
  content: "";
  position: absolute;
  left: 38px;
  width: 152px;
  height: 18px;
  background: #d9d9d9;
  z-index: -1;
}
.hscroll {
  height: 17px;
  flex: none;
  display: flex;
  background: #f0f0f0;
  margin-bottom: 1px;
}
.hs-btn {
  width: 16px;
  display: flex;
  align-items: center;
  justify-content: center;
}
.hs-track { flex: 1; position: relative; }
.hs-thumb {
  display: block;
  width: 157px;
  height: 100%;
  background: #cdcdcd;
}
.list-pane {
  flex: 1;
  background: #fff;
  border: 1px solid #828790;
  min-width: 0;
}
.list-head {
  height: 25px;
  display: flex;
  align-items: center;
  position: relative;
  padding-left: 7px;
}
.list-head .col-a {
  width: 344px;
  height: 25px;
  line-height: 26px;
  border-right: 1px solid #e5e5e5;
}
.list-head .col-b {
  width: 150px;
  height: 25px;
  line-height: 26px;
  padding-left: 6px;
  border-right: 1px solid #e5e5e5;
}
.sort-mark { position: absolute; left: 171px; top: 1px; }
.list-row {
  height: 19px;
  display: flex;
  align-items: center;
  padding-left: 6px;
  white-space: nowrap;
}
.list-row .col-a { width: 337px; padding-left: 3px; }
.list-row .col-b { width: 143px; padding-left: 0; }
.list-row.focus { position: relative; }
.list-row.focus::before {
  content: "";
  position: absolute;
  left: 20px;
  top: 0;
  width: 480px;
  height: 19px;
  border: 1px dotted #000;
}
.sp-status {
  height: 23px;
  flex: none;
  display: flex;
  background: #f0f0f0;
  padding-top: 2px;
}
.sp-cell { border-right: 1px solid #d7d7d7; }
.sp-cell.grow { width: 562px; }
.sp-cell.mid { width: 133px; }
.sp-cell.end { flex: 1; border-right: 0; }
```
